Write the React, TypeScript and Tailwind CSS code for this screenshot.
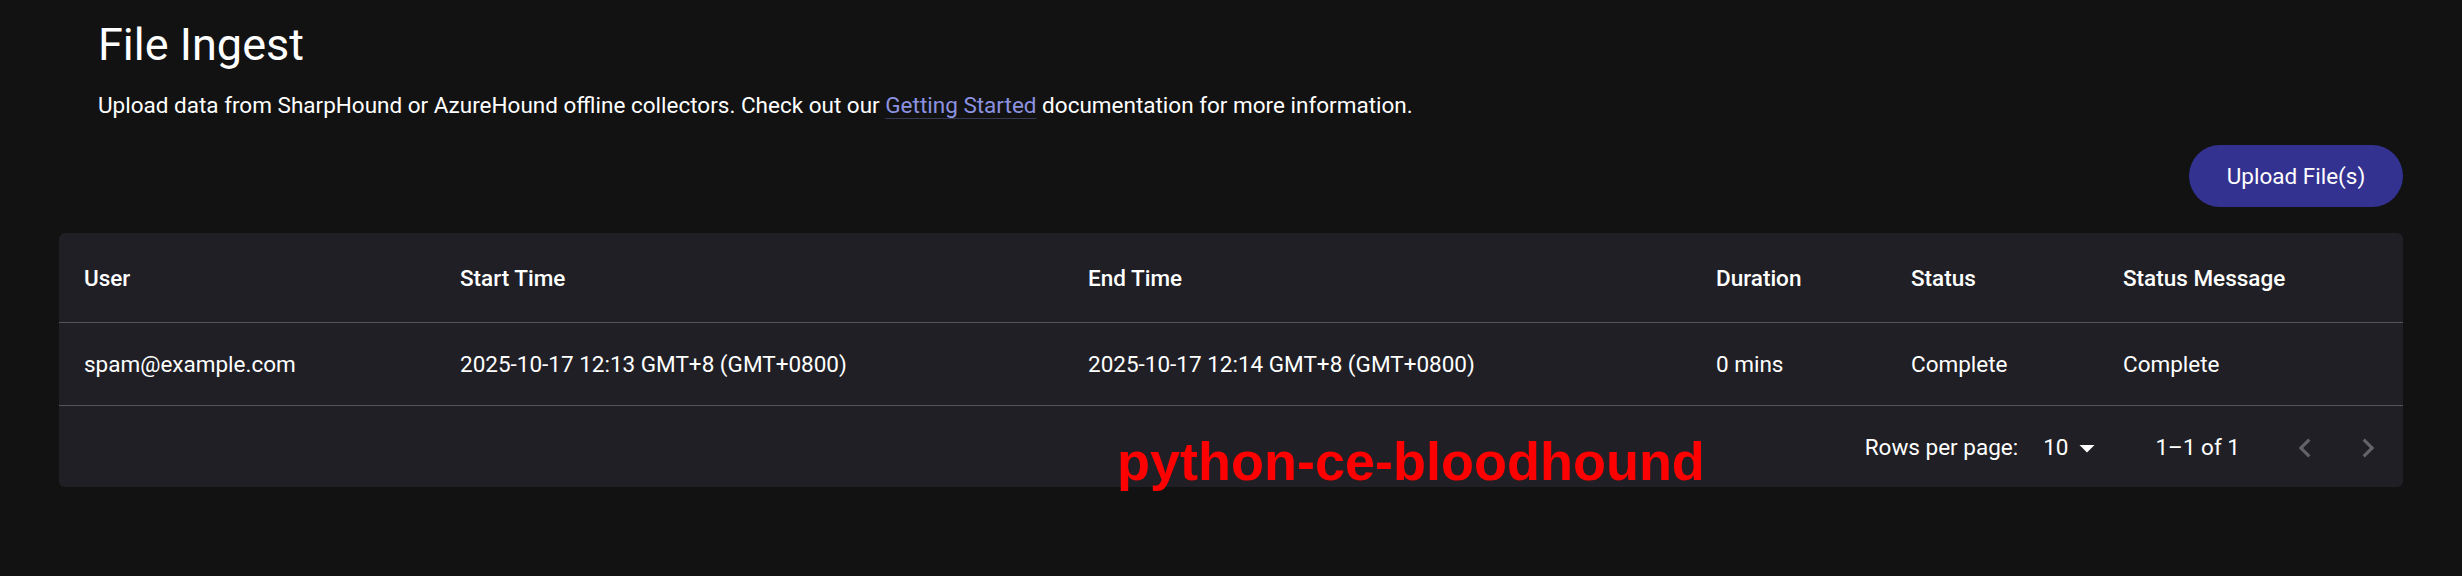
import React from 'react'

const columns = [
  { key: 'user', label: 'User' },
  { key: 'start', label: 'Start Time' },
  { key: 'end', label: 'End Time' },
  { key: 'duration', label: 'Duration' },
  { key: 'status', label: 'Status' },
  { key: 'message', label: 'Status Message' },
]

const rows = [
  {
    user: 'spam@example.com',
    start: '2025-10-17 12:13 GMT+8 (GMT+0800)',
    end: '2025-10-17 12:14 GMT+8 (GMT+0800)',
    duration: '0 mins',
    status: 'Complete',
    message: 'Complete',
  },
]

const gridCols = 'grid grid-cols-[376px_628px_628px_195px_212px_1fr]'

export default function App() {
  return (
    <div className="relative min-h-[576px] bg-[#121212] px-[59px] text-white font-['Roboto',sans-serif]">
      {/* Header */}
      <div className="pl-[39px] pt-[17px]">
        <h1 className="text-[45px] leading-[56px] font-normal">File Ingest</h1>
        <p className="mt-[16px] text-[22.5px] leading-[32px]">
          Upload data from SharpHound or AzureHound offline collectors. Check out our{' '}
          <a className="text-[#8c92e0] underline decoration-[#8c92e0]/30 decoration-1 underline-offset-[5px]">
            Getting Started
          </a>{' '}
          documentation for more information.
        </p>
      </div>

      <div className="mt-[24px] flex justify-end">
        <button className="h-[62px] w-[214px] rounded-full bg-[#343291] pt-[1px] text-[22.5px] text-white">
          Upload File(s)
        </button>
      </div>

      {/* Table */}
      <div className="mt-[26px] rounded-[6px] bg-[#201f26] text-[22.5px]">
        <div className={`${gridCols} h-[90px] items-center border-b border-[#55555a] pt-[2px] font-medium`}>
          {columns.map((c) => (
            <div key={c.key} className="pl-[25px]">
              {c.label}
            </div>
          ))}
        </div>
        {rows.map((r, i) => (
          <div key={i} className={`${gridCols} h-[83px] items-center border-b border-[#55555a] pt-[2px]`}>
            {columns.map((c) => (
              <div key={c.key} className="pl-[25px]">
                {r[c.key as keyof typeof r]}
              </div>
            ))}
          </div>
        ))}
        <div className="flex h-[81px] items-center justify-end pr-[16px] pt-[2px]">
          <span>Rows per page:</span>
          <div className="ml-[25px] flex items-center">
            <span>10</span>
            <svg viewBox="0 0 24 24" className="ml-[1px] h-[36px] w-[36px] fill-white">
              <path d="M7 10l5 5 5-5z" />
            </svg>
          </div>
          <span className="ml-[50px]">1–1 of 1</span>
          <svg viewBox="0 0 24 24" className="ml-[46px] h-[38px] w-[38px] fill-white/30">
            <path d="M15.41 16.59 10.83 12l4.58-4.59L14 6l-6 6 6 6z" />
          </svg>
          <svg viewBox="0 0 24 24" className="ml-[25px] h-[38px] w-[38px] fill-white/30">
            <path d="M8.59 16.59 13.17 12 8.59 7.41 10 6l6 6-6 6z" />
          </svg>
        </div>
      </div>

      {/* watermark */}
      <div className="pointer-events-none absolute left-[1117px] top-[434px] text-[54px] leading-none font-bold text-[#ff0000] font-['Liberation_Sans',Arial,sans-serif]">
        python-ce-bloodhound
      </div>
    </div>
  )
}
